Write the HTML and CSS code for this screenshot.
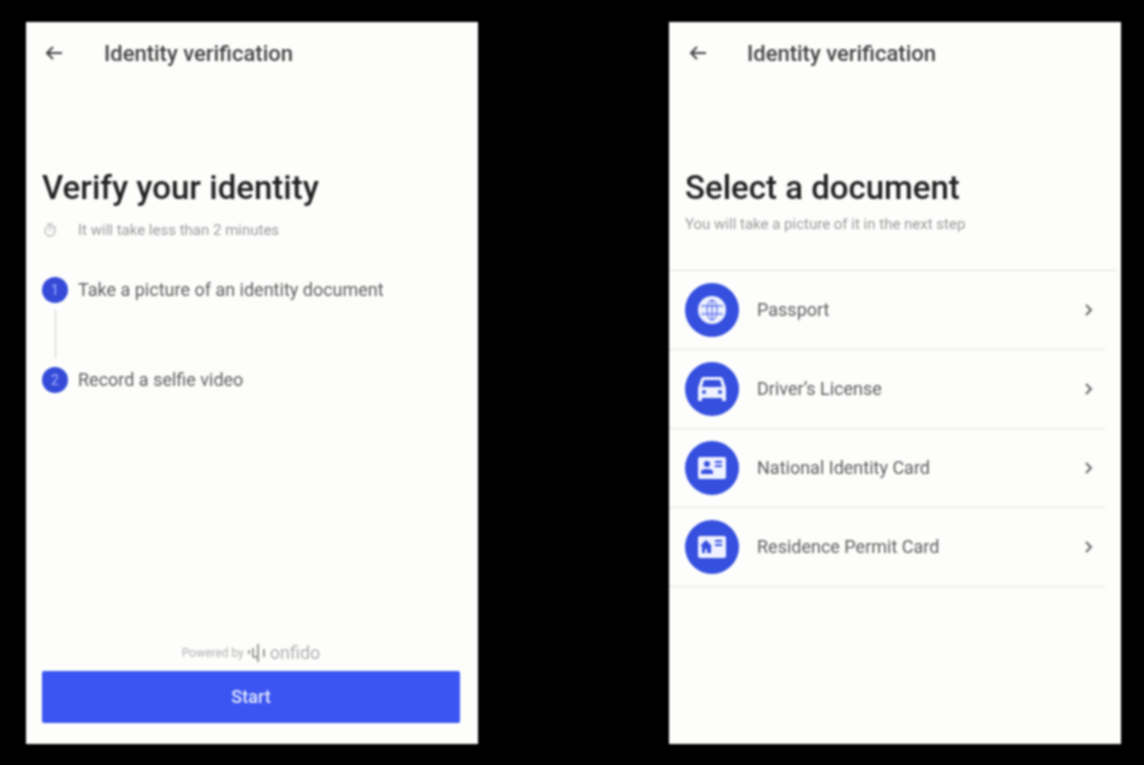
FILE: index.html
```html
<!DOCTYPE html>
<html lang="en">
<head>
<meta charset="utf-8">
<meta name="viewport" content="width=device-width, initial-scale=1">
<title>Identity verification</title>
<link rel="stylesheet" href="styles.css">
</head>
<body>
<main class="stage">
  <section class="screen">
    <header class="bar">
      <button class="back" type="button" aria-label="Back">
        <svg viewBox="0 0 20 20" width="20" height="20"><path d="M18 9H3M9 3L3 9l6 6"/></svg>
      </button>
      <h2 class="bar-title">Identity verification</h2>
    </header>
    <h1 class="title">Verify your identity</h1>
    <p class="duration">
      <svg class="timer" viewBox="0 0 16 16" width="16" height="16"><circle cx="8" cy="9" r="5"/><path d="M5 2h6M8 6v3M12 4l2 2"/></svg>
      <span>It will take less than 2 minutes</span>
    </p>
    <ol class="steps">
      <li class="step"><span class="num">1</span><span>Take a picture of an identity document</span></li>
      <li class="step"><span class="num">2</span><span>Record a selfie video</span></li>
    </ol>
    <footer class="footer">
      <p class="powered">
        <span>Powered by</span>
        <svg class="mark" viewBox="0 0 18 20" width="18" height="20"><path d="M1 7v4M5 5v9M10 1v18M16 6v8M5 14h5"/></svg>
        <span class="brand">onfido</span>
      </p>
      <button class="start" type="button">Start</button>
    </footer>
  </section>

  <section class="screen">
    <header class="bar">
      <button class="back" type="button" aria-label="Back">
        <svg viewBox="0 0 20 20" width="20" height="20"><path d="M19 9H4M10 3L4 9l6 6"/></svg>
      </button>
      <h2 class="bar-title">Identity verification</h2>
    </header>
    <h1 class="title">Select a document</h1>
    <p class="hint">You will take a picture of it in the next step</p>
    <ul class="docs">
      <li class="doc"><button class="doc-button" type="button">
        <span class="disc"><svg viewBox="0 0 28 28" width="28" height="28"><circle class="fill" cx="14" cy="14" r="14"/><g class="cut thin"><ellipse cx="14" cy="14" rx="5" ry="10"/><path d="M3 10h22M3 18h22M14 4v20"/></g></svg></span>
        <span class="doc-name">Passport</span>
        <svg class="chevron" viewBox="0 0 12 14" width="12" height="14"><path d="M3 2l5 5-5 5"/></svg>
      </button></li>
      <li class="doc"><button class="doc-button" type="button">
        <span class="disc"><svg viewBox="0 0 28 28" width="28" height="28"><path class="fill" fill-rule="evenodd" d="M5 2h18q1 0 2 2l3 9v12q0 1-1 1h-2q-1 0-1-1v-2H4v2q0 1-1 1H1q-1 0-1-1V13l3-9q1-2 2-2zM6 5l-2 7h20l-2-7zM6 15a2 2 0 1 0 0 4 2 2 0 0 0 0-4zM22 15a2 2 0 1 0 0 4 2 2 0 0 0 0-4z"/></svg></span>
        <span class="doc-name">Driver’s License</span>
        <svg class="chevron" viewBox="0 0 12 14" width="12" height="14"><path d="M3 2l5 5-5 5"/></svg>
      </button></li>
      <li class="doc"><button class="doc-button" type="button">
        <span class="disc"><svg viewBox="0 0 28 28" width="28" height="28"><rect class="fill" x="0" y="3" width="28" height="22" rx="2"/><circle class="hole" cx="9" cy="10" r="3"/><path class="hole" d="M3 20v-2q0-3 6-3t6 3v2z"/><path class="cut" d="M17 8h7M17 12h7"/></svg></span>
        <span class="doc-name">National Identity Card</span>
        <svg class="chevron" viewBox="0 0 12 14" width="12" height="14"><path d="M3 2l5 5-5 5"/></svg>
      </button></li>
      <li class="doc"><button class="doc-button" type="button">
        <span class="disc"><svg viewBox="0 0 28 28" width="28" height="28"><rect class="fill" x="0" y="3" width="28" height="22" rx="2"/><path class="hole" d="M8 7l6 6h-1v7h-4v-4H7v4H4v-7H2z"/><path class="cut" d="M17 8h7M17 12h7"/></svg></span>
        <span class="doc-name">Residence Permit Card</span>
        <svg class="chevron" viewBox="0 0 12 14" width="12" height="14"><path d="M3 2l5 5-5 5"/></svg>
      </button></li>
    </ul>
  </section>
</main>
</body>
</html>
```

FILE: styles.css
```css
* { box-sizing: border-box; }
body {
  margin: 0;
  background: #000;
  color: #5c5c5c;
  font: 18px/24px Roboto, sans-serif;
}
h1, h2, p, ol, ul { margin: 0; padding: 0; font-weight: 400; }
ol, ul { list-style: none; }
button { border: 0; padding: 0; background: none; color: inherit; font: inherit; cursor: pointer; }
svg { display: block; fill: none; stroke: currentColor; stroke-width: 2; }

.stage {
  display: grid;
  grid-template-columns: 1fr 1fr;
  gap: 191px;
  min-height: 100vh;
  padding: 22px 23px 21px 26px;
}
.screen {
  display: flex;
  flex-direction: column;
  padding: 16px 18px 21px 16px;
  background: #fdfefc;
  filter: blur(1px);
}
.bar { display: flex; align-items: center; gap: 40px; height: 32px; padding-left: 2px; color: #444; }
.bar-title { font-size: 22px; font-weight: 500; line-height: 32px; }
.title { margin-top: 98px; color: #222; font-size: 33px; font-weight: 500; line-height: 40px; }

.duration { display: flex; align-items: center; gap: 20px; margin-top: 12px; color: #999; font-size: 15px; line-height: 20px; }
.timer { stroke-width: 1; }
.steps { display: grid; gap: 62px; margin-top: 36px; }
.step { position: relative; display: flex; align-items: center; gap: 10px; height: 28px; }
.step + .step::before {
  content: "";
  position: absolute;
  bottom: 36px;
  left: 13px;
  width: 1px;
  height: 48px;
  background: #ccc;
}
.num {
  display: grid;
  place-items: center;
  width: 26px;
  height: 26px;
  border-radius: 50%;
  background: #354bd8;
  color: #a3b2ff;
  font-size: 14px;
}
.footer { display: grid; gap: 8px; margin-top: auto; }
.powered { display: flex; align-items: center; justify-content: center; gap: 4px; color: #b0b0b0; font-size: 12px; line-height: 20px; }
.mark { color: #999; }
.brand { font-size: 18px; }
.start { height: 52px; border-radius: 2px; background: #3a55f2; color: #e6eaff; font-weight: 500; }

.hint { margin-top: 6px; color: #999; font-size: 15px; line-height: 20px; }
.docs { margin: 36px -14px 0 -16px; border-top: 1px solid #e2e2e2; }
.doc { margin-right: 12px; border-bottom: 1px solid #e2e2e2; }
.doc-button { display: flex; align-items: center; width: 100%; height: 78px; padding: 0 10px 0 16px; text-align: left; }
.disc { display: grid; place-items: center; width: 54px; height: 54px; border-radius: 50%; background: #354fdf; }
.fill { fill: #eef1ff; stroke: none; }
.hole { fill: #354fdf; stroke: none; }
.cut { stroke: #354fdf; }
.thin { stroke-width: 1; }
.doc-name { flex: 1; margin-left: 18px; }
.chevron { color: #666; }
```
